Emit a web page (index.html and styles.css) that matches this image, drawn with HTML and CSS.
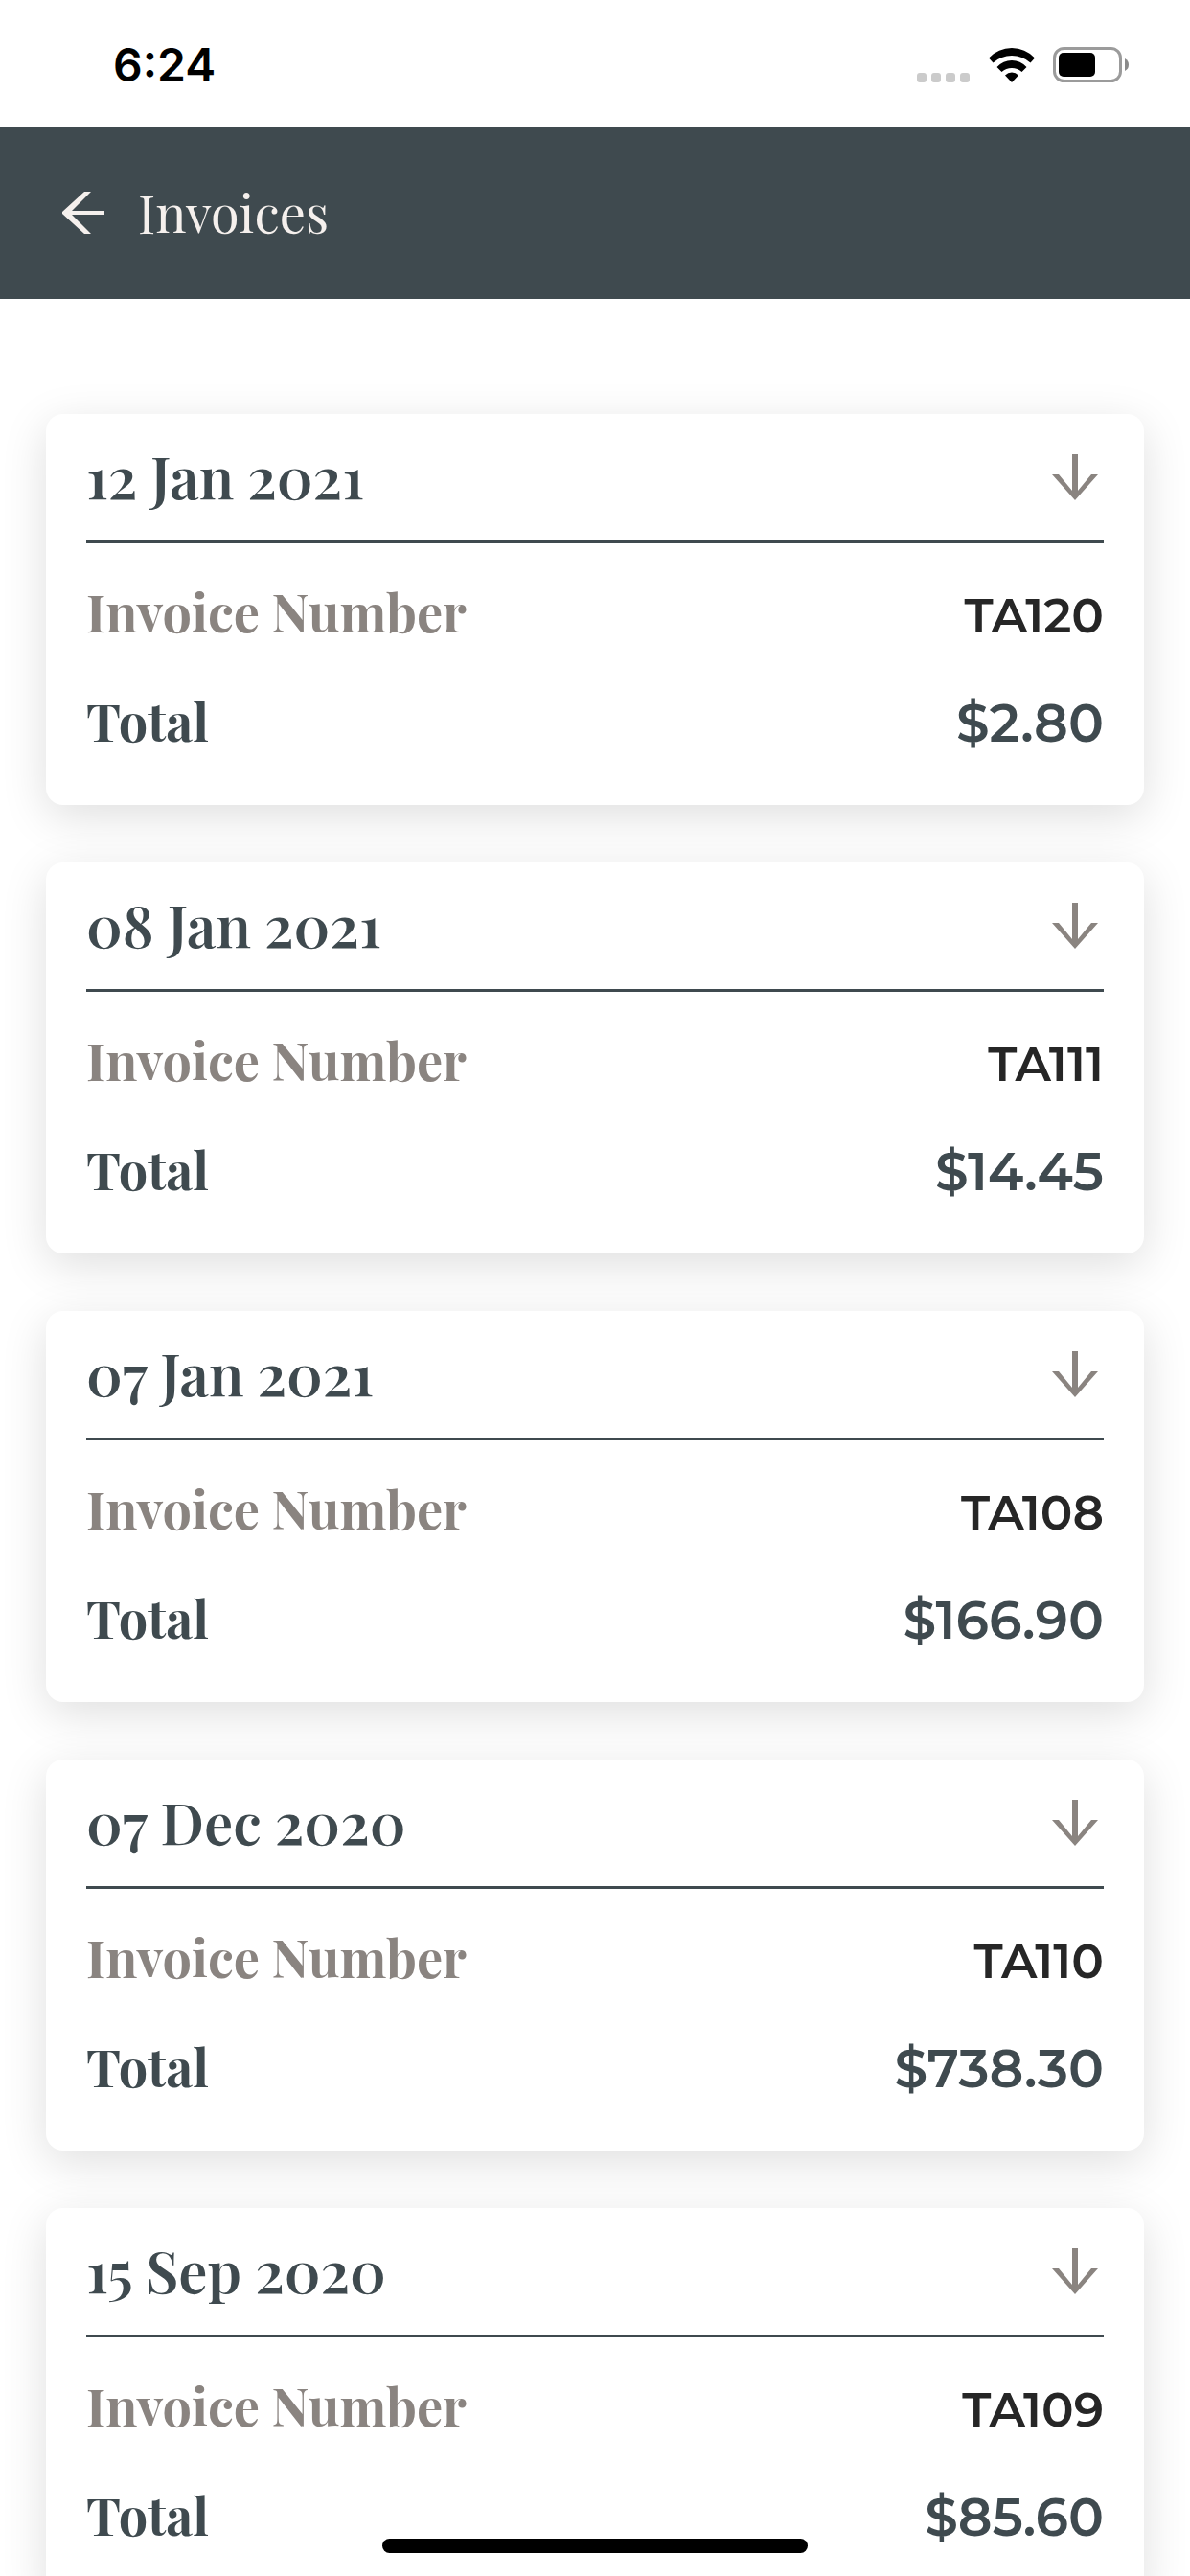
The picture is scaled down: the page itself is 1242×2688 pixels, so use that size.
FILE: index.html
```html
<!DOCTYPE html>
<html lang="en">
<head>
    <meta charset="UTF-8">
    <meta name="viewport" content="width=device-width, initial-scale=1.0">
    <title>Invoices</title>
    <link rel="stylesheet" href="styles.css">
</head>
<body>
    <svg class="sprite" aria-hidden="true">
        <symbol id="arrow-down" viewBox="0 0 48 48">
            <path d="M21 0h6v38L41 21h7L24 48 0 21h7l14 17z"/>
        </symbol>
    </svg>

    <div class="status-bar">
        <span class="time">6:24</span>
        <div class="status-icons">
            <svg class="signal" viewBox="0 0 56 10" aria-hidden="true">
                <rect x="0" width="10" height="10" rx="3"/>
                <rect x="15" width="10" height="10" rx="3"/>
                <rect x="30" width="10" height="10" rx="3"/>
                <rect x="45" width="10" height="10" rx="3"/>
            </svg>
            <svg class="wifi" viewBox="0 0 48 36" aria-hidden="true">
                <path d="M0 10.5Q10 0 24 0t24 10.5l-4.500 5Q35 8 24 8T4.500 15.500z"/>
                <path d="M8.500 20Q15 13 24 13t15.500 7L34.500 25Q30 21 24 21t-10.500 4z"/>
                <path d="M17 28.500Q20 25.500 24 25.500t7 3L24 36z"/>
            </svg>
            <svg class="battery" viewBox="0 0 79 37" aria-hidden="true">
                <rect class="battery-shell" x="1.500" y="1.500" width="69" height="34" rx="10"/>
                <rect x="6" y="6" width="38" height="25" rx="5"/>
                <path class="battery-tip" d="M75 12q4 2 4 6.500T75 25z"/>
            </svg>
        </div>
    </div>

    <header class="header">
        <button class="back" aria-label="Back">
            <svg viewBox="0 0 44 44" aria-hidden="true">
                <path d="M44 20v4H10l20 20h-7L0 23v-2L23 0h7L10 20z"/>
            </svg>
        </button>
        <h1>Invoices</h1>
    </header>

    <main class="invoice-list">
        <article class="card">
            <div class="card-header">
                <h2>12 Jan 2021</h2>
                <button class="download" aria-label="Download invoice TA120"><svg><use href="#arrow-down"/></svg></button>
            </div>
            <dl>
                <div class="row number"><dt>Invoice Number</dt><dd>TA120</dd></div>
                <div class="row total"><dt>Total</dt><dd>$2.80</dd></div>
            </dl>
        </article>

        <article class="card">
            <div class="card-header">
                <h2>08 Jan 2021</h2>
                <button class="download" aria-label="Download invoice TA111"><svg><use href="#arrow-down"/></svg></button>
            </div>
            <dl>
                <div class="row number"><dt>Invoice Number</dt><dd>TA111</dd></div>
                <div class="row total"><dt>Total</dt><dd>$14.45</dd></div>
            </dl>
        </article>

        <article class="card">
            <div class="card-header">
                <h2>07 Jan 2021</h2>
                <button class="download" aria-label="Download invoice TA108"><svg><use href="#arrow-down"/></svg></button>
            </div>
            <dl>
                <div class="row number"><dt>Invoice Number</dt><dd>TA108</dd></div>
                <div class="row total"><dt>Total</dt><dd>$166.90</dd></div>
            </dl>
        </article>

        <article class="card">
            <div class="card-header">
                <h2>07 Dec 2020</h2>
                <button class="download" aria-label="Download invoice TA110"><svg><use href="#arrow-down"/></svg></button>
            </div>
            <dl>
                <div class="row number"><dt>Invoice Number</dt><dd>TA110</dd></div>
                <div class="row total"><dt>Total</dt><dd>$738.30</dd></div>
            </dl>
        </article>

        <article class="card">
            <div class="card-header">
                <h2>15 Sep 2020</h2>
                <button class="download" aria-label="Download invoice TA109"><svg><use href="#arrow-down"/></svg></button>
            </div>
            <dl>
                <div class="row number"><dt>Invoice Number</dt><dd>TA109</dd></div>
                <div class="row total"><dt>Total</dt><dd>$85.60</dd></div>
            </dl>
        </article>
    </main>

    <div class="home-indicator"></div>
</body>
</html>
```

FILE: styles.css
```css
* {
    box-sizing: border-box;
}
body {
    display: flex;
    flex-direction: column;
    height: 100vh;
    margin: 0;
    background-color: #fff;
    color: #3f4a4f;
    font-family: "Playfair Display", "Liberation Serif", serif;
}
h1, h2, dl, dd {
    margin: 0;
}
button {
    padding: 0;
    border: none;
    background: none;
    cursor: pointer;
}
svg {
    display: block;
}
.sprite {
    position: absolute;
    width: 0;
    height: 0;
}

/* Status bar */
.status-bar {
    flex: none;
    display: flex;
    align-items: center;
    justify-content: space-between;
    height: 132px;
    padding: 3px 64px 0 118px;
    color: #000;
}
.time {
    font-family: Inter, sans-serif;
    font-size: 48px;
    font-weight: 600;
}
.status-icons {
    display: flex;
    align-items: flex-end;
    gap: 19px;
}
.signal {
    width: 56px;
    height: 10px;
    fill: #cbcbcb;
}
.wifi {
    width: 48px;
    height: 36px;
}
.battery {
    width: 79px;
    height: 37px;
}
.battery-shell {
    fill: none;
    stroke: #9b9b9b;
    stroke-width: 3;
}
.battery-tip {
    fill: #8a8a8a;
}

/* Title bar */
.header {
    flex: none;
    display: flex;
    align-items: center;
    gap: 35px;
    height: 180px;
    padding: 0 65px;
    background-color: #3f4a4f;
    color: #f5f0ed;
}
.header h1 {
    font-size: 54px;
    font-weight: 400;
}
.back svg {
    width: 44px;
    height: 44px;
    fill: #f5f0ed;
}

/* Invoices */
.invoice-list {
    flex: 1;
    display: flex;
    flex-direction: column;
    gap: 60px;
    min-height: 0;
    padding: 120px 48px;
    overflow-y: auto;
    scrollbar-width: none;
}
.card {
    flex: none;
    padding: 0 42px 45px;
    border-radius: 18px;
    background-color: #fff;
    box-shadow: 0 12px 48px rgba(0, 0, 0, 0.13);
}
.card-header {
    display: flex;
    align-items: center;
    justify-content: space-between;
    height: 135px;
    padding-right: 6px;
    border-bottom: 3px solid #3f4a4f;
}
.card-header h2 {
    padding-bottom: 4px;
    font-size: 60px;
    font-weight: 600;
}
.download svg {
    width: 48px;
    height: 48px;
    fill: #8a8480;
}
.row {
    display: flex;
    align-items: baseline;
    justify-content: space-between;
    height: 114px;
    padding-top: 35px;
    line-height: 72px;
}
.row dt {
    font-size: 54px;
    font-weight: 700;
}
.row dd {
    font-family: Montserrat, Inter, sans-serif;
    font-weight: 600;
}
.number dt {
    color: #8a8480;
}
.number dd {
    color: #262626;
    font-size: 50px;
}
.total dd {
    font-size: 55px;
}

.home-indicator {
    position: fixed;
    bottom: 24px;
    left: 50%;
    width: 444px;
    max-width: 60%;
    height: 15px;
    border-radius: 8px;
    background-color: #000;
    transform: translateX(-50%);
}
```
